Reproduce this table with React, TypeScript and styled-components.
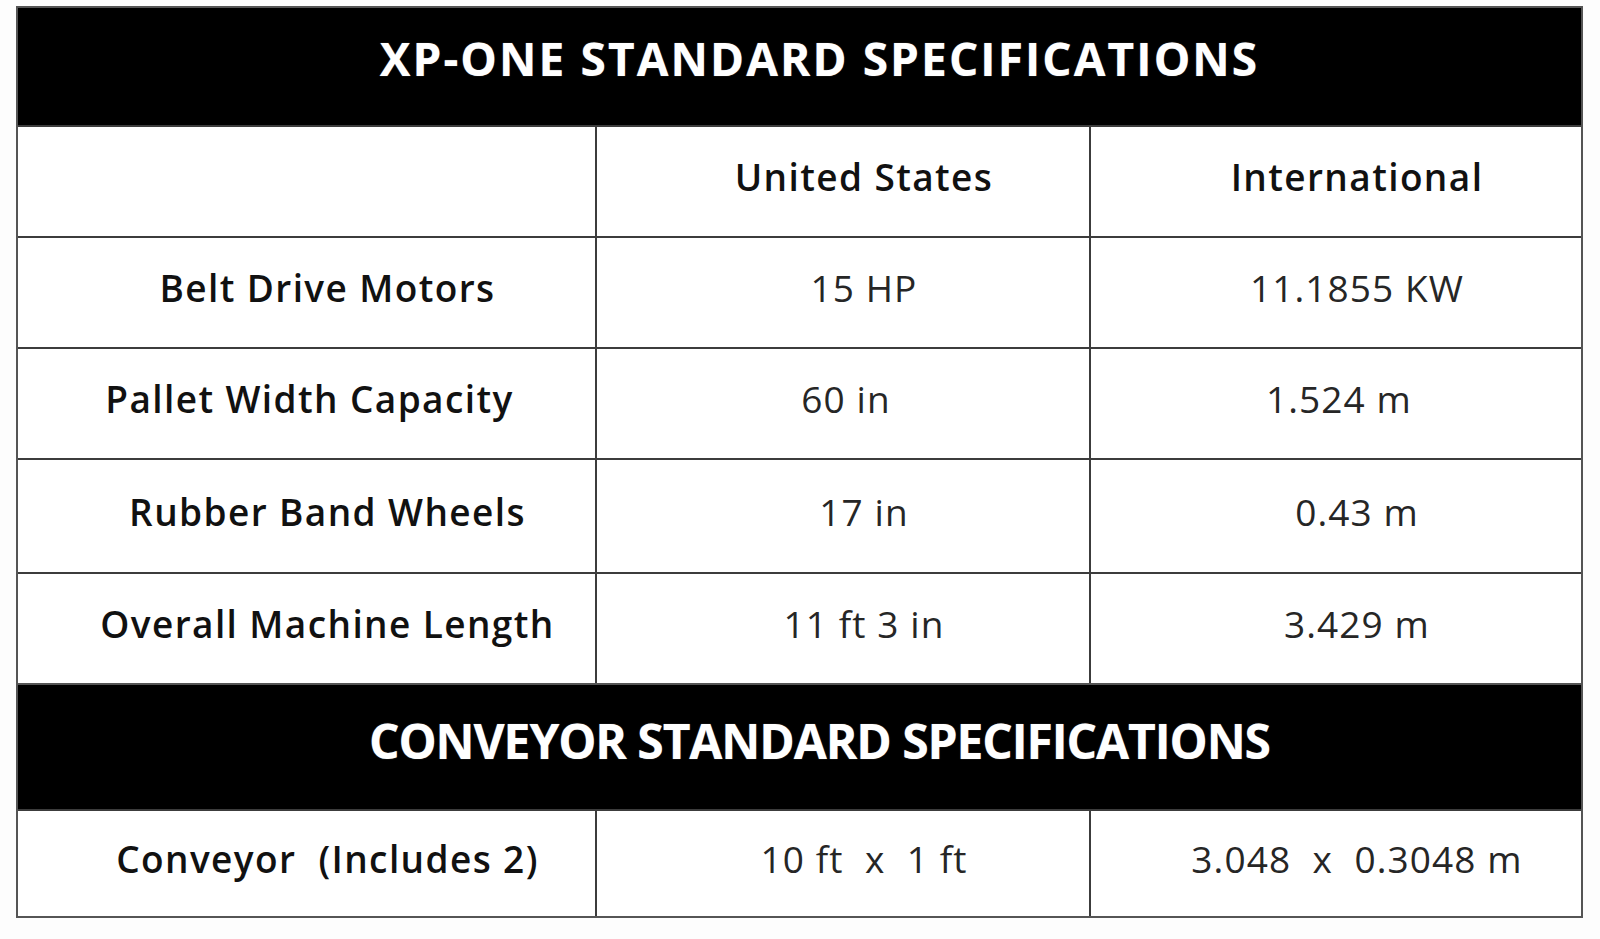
import React from "react";
import styled, { createGlobalStyle } from "styled-components";

const GlobalStyle = createGlobalStyle`
    html, body {
        margin: 0;
        padding: 0;
        background: #ffffff;
    }
    body {
        font-family: "Open Sans", "Liberation Sans", sans-serif;
        color: #1a1a1a;
    }
`

const Page = styled.div`
    width: 1600px;
    height: 939px;
    padding: 6px 0 0 16px;
    box-sizing: border-box;
    background: #fdfdfd;
`

const Table = styled.div`
    width: 1567px;
    border: 2px solid #555555;
    box-sizing: border-box;
    background: #ffffff;
`

const Band = styled.div<{ $height: number; $size: number; $spacing: number; $lift: number }>`
    height: ${(p) => p.$height}px;
    background: #000000;
    color: #ffffff;
    display: flex;
    align-items: center;
    justify-content: center;
    padding: 0 0 ${(p) => p.$lift}px 40px;
    box-sizing: border-box;
    font-size: ${(p) => p.$size}px;
    font-weight: 700;
    letter-spacing: ${(p) => p.$spacing}px;
    text-shadow: 0 0 1px rgba(255, 255, 255, 0.5);
    border-top: 2px solid #555555;
    &:first-child {
        border-top: none;
    }
`

const Row = styled.div<{ $height: number }>`
    display: grid;
    grid-template-columns: 579px 494px 1fr;
    height: ${(p) => p.$height}px;
    border-top: 2px solid #3c3c3c;
    box-sizing: border-box;
`

const Cell = styled.div<{ $strong?: boolean; $nudge?: boolean }>`
    display: flex;
    align-items: center;
    justify-content: center;
    padding: 0 0 10px ${(p) => (p.$nudge ? 6 : 42)}px;
    border-right: 2px solid #3c3c3c;
    font-size: 37px;
    letter-spacing: ${(p) => (p.$strong ? 1.4 : 1.1)}px;
    font-weight: ${(p) => (p.$strong ? 600 : 400)};
    color: ${(p) => (p.$strong ? "#111111" : "#262626")};
    white-space: pre;
    &:last-child {
        border-right: none;
    }
`

type Spec = { label: string; us: string; intl: string; height: number; nudge?: boolean };

const machine: Spec[] = [
    { label: "Belt Drive Motors", us: "15 HP", intl: "11.1855 KW", height: 111 },
    { label: "Pallet Width Capacity", us: "60 in", intl: "1.524 m", height: 111, nudge: true },
    { label: "Rubber Band Wheels", us: "17 in", intl: "0.43 m", height: 114 },
    { label: "Overall Machine Length", us: "11 ft 3 in", intl: "3.429 m", height: 111 },
];

function SpecRow({ spec }: { spec: Spec }) {
    return (
        <Row $height={spec.height}>
            <Cell $strong $nudge={spec.nudge}>{spec.label}</Cell>
            <Cell $nudge={spec.nudge}>{spec.us}</Cell>
            <Cell $nudge={spec.nudge}>{spec.intl}</Cell>
        </Row>
    )
}

function App() {
    return (
        <>
            <GlobalStyle />
            <Page>
                <Table>
                    <Band $height={117} $size={46} $spacing={2.1} $lift={18}>XP-ONE STANDARD SPECIFICATIONS</Band>
                    <Row $height={111}>
                        <Cell />
                        <Cell $strong>United States</Cell>
                        <Cell $strong>International</Cell>
                    </Row>
                    {machine.map((spec) => (
                        <SpecRow key={spec.label} spec={spec} />
                    ))}
                    <Band $height={126} $size={48} $spacing={-1.1} $lift={14}>CONVEYOR STANDARD SPECIFICATIONS</Band>
                    <Row $height={107}>
                        <Cell $strong>Conveyor  (Includes 2)</Cell>
                        <Cell>10 ft  x  1 ft</Cell>
                        <Cell>3.048  x  0.3048 m</Cell>
                    </Row>
                </Table>
            </Page>
        </>
    )
}

export default App;
